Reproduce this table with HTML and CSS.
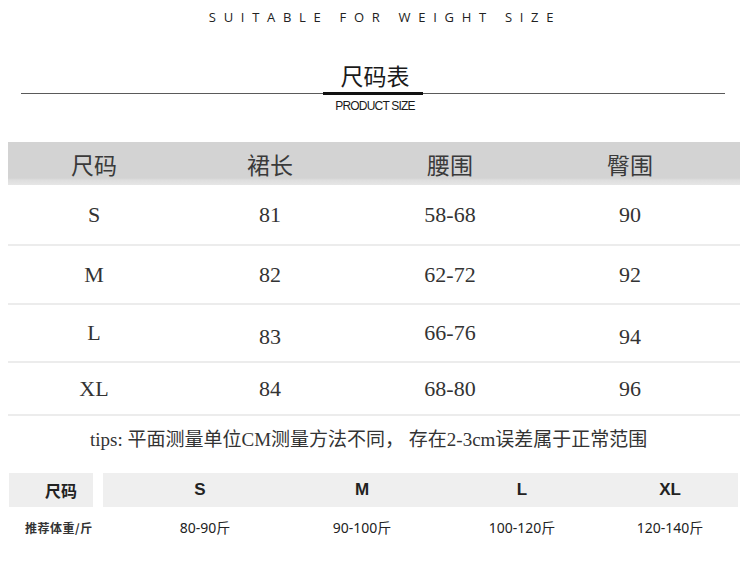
FILE: index.html
```html
<!DOCTYPE html>
<html lang="zh">
<head>
<meta charset="utf-8">
<title>尺码表</title>
<link rel="stylesheet" href="styles.css">
</head>
<body>
<div class="page">
  <div class="top-title">SUITABLE FOR WEIGHT SIZE</div>
  <div class="title">尺码表</div>
  <div class="rule"><span class="line"></span><span class="bar"></span><span class="line"></span></div>
  <div class="subtitle">PRODUCT SIZE</div>

  <div class="size-table">
    <div class="row head">
      <div class="cell">尺码</div>
      <div class="cell">裙长</div>
      <div class="cell">腰围</div>
      <div class="cell">臀围</div>
    </div>
    <div class="row r1">
      <div class="cell">S</div>
      <div class="cell">81</div>
      <div class="cell">58-68</div>
      <div class="cell">90</div>
    </div>
    <div class="row r2">
      <div class="cell">M</div>
      <div class="cell">82</div>
      <div class="cell">62-72</div>
      <div class="cell">92</div>
    </div>
    <div class="row r3">
      <div class="cell">L</div>
      <div class="cell low">83</div>
      <div class="cell">66-76</div>
      <div class="cell low">94</div>
    </div>
    <div class="row r4">
      <div class="cell">XL</div>
      <div class="cell">84</div>
      <div class="cell">68-80</div>
      <div class="cell">96</div>
    </div>
  </div>

  <div class="tips">tips: 平面测量单位CM测量方法不同， 存在2-3cm误差属于正常范围</div>

  <div class="weight-table">
    <div class="wrow whead">
      <div class="wlabel">尺码</div>
      <div class="wvals">
        <div class="wcell">S</div>
        <div class="wcell">M</div>
        <div class="wcell">L</div>
        <div class="wcell">XL</div>
      </div>
    </div>
    <div class="wrow wbody">
      <div class="wlabel">推荐体重/斤</div>
      <div class="wvals">
        <div class="wcell">80-90斤</div>
        <div class="wcell">90-100斤</div>
        <div class="wcell">100-120斤</div>
        <div class="wcell">120-140斤</div>
      </div>
    </div>
  </div>
</div>
</body>
</html>
```

FILE: styles.css
```css
html, body {
  margin: 0;
  padding: 0;
  background: #ffffff;
}

.page {
  width: 750px;
  height: 568px;
  overflow: hidden;
  color: #333;
  font-family: "Noto Sans CJK SC", "Noto Sans", sans-serif;
}

.top-title {
  height: 34px;
  line-height: 34px;
  text-align: center;
  font-family: "Open Sans", "Noto Sans", sans-serif;
  font-weight: 400;
  font-size: 13px;
  letter-spacing: 7.7px;
  padding-left: 20px;
  color: #222;
}

.title {
  margin-top: 26px;
  height: 30px;
  line-height: 30px;
  text-align: center;
  font-size: 23px;
  color: #1a1a1a;
}

.rule {
  margin: 2px 25px 0 21px;
  height: 3px;
  display: flex;
  align-items: center;
}

.rule .line {
  flex: 1;
  height: 1px;
  background: #5a5a5a;
}

.rule .bar {
  width: 100px;
  height: 3px;
  background: #111;
}

.subtitle {
  margin-top: 5px;
  height: 12px;
  line-height: 12px;
  text-align: center;
  font-family: "Liberation Sans", Arial, sans-serif;
  font-size: 12px;
  letter-spacing: -0.8px;
  color: #1a1a1a;
}

.size-table {
  margin: 30px 10px 0 8px;
}

.row {
  display: grid;
  grid-template-columns: 172px 180px 180px 180px 1fr;
  align-items: center;
}

.row.head {
  height: 43px;
  background: linear-gradient(to bottom, #d3d3d3 0, #d3d3d3 36px, #dedede 38px, #e6e6e6 43px);
  font-family: "Noto Sans CJK SC", sans-serif;
  font-size: 23px;
  color: #3a3a3a;
}

.row.r1, .row.r2, .row.r3, .row.r4 {
  font-family: "Liberation Serif", "Times New Roman", serif;
  font-size: 22px;
  color: #333;
  border-bottom: 2px solid #ececec;
}

.row.r1 { height: 59px; }
.row.r2 { height: 57px; }
.row.r3 { height: 56px; }
.row.r4 { height: 51px; }

.cell {
  text-align: center;
  line-height: 24px;
}

.cell.low {
  padding-top: 8px;
}

.tips {
  margin-top: 12px;
  height: 24px;
  line-height: 24px;
  padding-left: 90px;
  font-family: "Liberation Serif", "Noto Sans CJK SC", serif;
  font-size: 19px;
  color: #333;
}

.weight-table {
  margin: 21px 12px 0 9px;
}

.wrow {
  display: flex;
}

.wlabel {
  width: 84px;
  flex: none;
  box-sizing: border-box;
  margin-right: 10px;
  display: flex;
  align-items: center;
}

.wvals {
  flex: 1;
  display: grid;
  grid-template-columns: 194px 130px 190px 106px 1fr;
  align-items: center;
}

.wcell {
  text-align: center;
}

.whead {
  height: 34px;
}

.whead .wlabel {
  background: #eeeeee;
  justify-content: center;
  padding-left: 20px;
  font-family: "Noto Sans CJK SC", sans-serif;
  font-weight: 700;
  font-size: 16px;
  color: #222;
}

.whead .wvals {
  background: #efefef;
  font-family: "Liberation Sans", Arial, sans-serif;
  font-weight: 700;
  font-size: 17px;
  color: #222;
}

.wbody {
  height: 40px;
}

.wbody .wlabel {
  padding-left: 16px;
  white-space: nowrap;
  font-family: "Noto Sans CJK SC", sans-serif;
  font-weight: 700;
  font-size: 12px;
  letter-spacing: 0.5px;
  color: #333;
}

.wbody .wvals {
  font-family: "Noto Sans", "Noto Sans CJK SC", sans-serif;
  font-size: 14px;
  color: #222;
}

.wbody .wcell:first-child {
  padding-left: 10px;
}
```
